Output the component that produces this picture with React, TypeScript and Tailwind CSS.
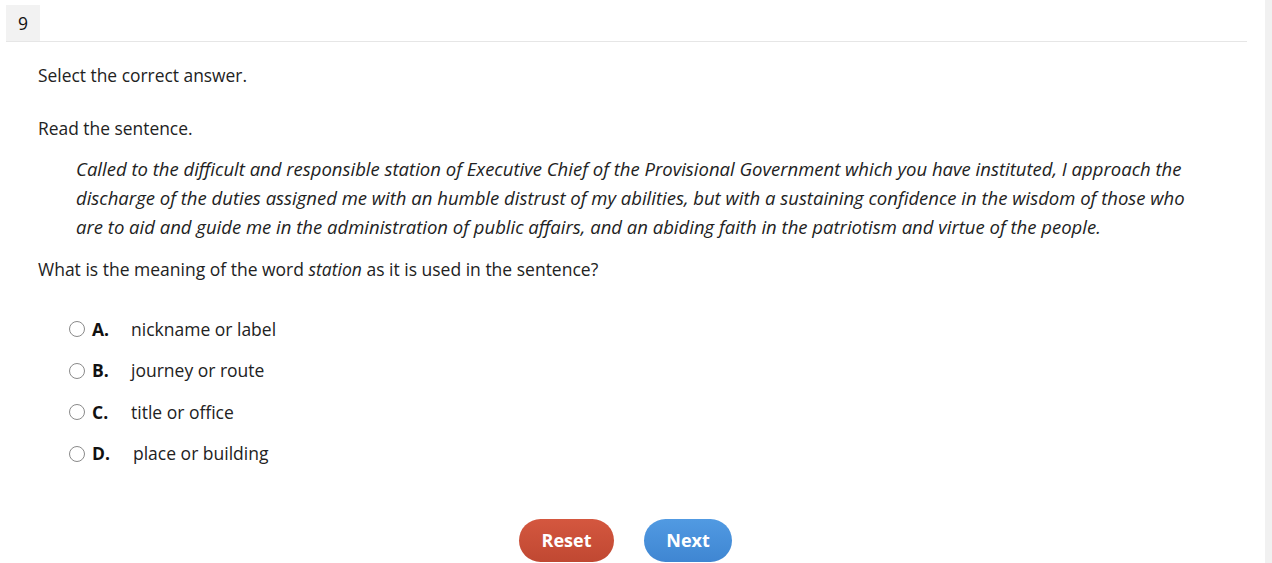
import React from 'react';

const options = [
  { key: 'A', text: 'nickname or label' },
  { key: 'B', text: 'journey or route' },
  { key: 'C', text: 'title or office' },
  { key: 'D', text: 'place or building' },
];

export default function App() {
  return (
    <div className="flex h-[563px] w-full overflow-hidden bg-white font-['Open_Sans',sans-serif] text-[#222]">
      <div className="flex-1 pl-[6px] pr-[18px] pt-[5px]">
        {/* Question number */}
        <div className="border-b border-[#e6e6e6]">
          <div className="flex h-[36px] w-[34px] items-center justify-center bg-[#f2f2f2] text-[17.5px] text-[#111]">
            9
          </div>
        </div>

        <div className="pl-[32px] pr-[30px]">
          <p className="mt-[20px] text-[17.4px] leading-[26px]">Select the correct answer.</p>
          <p className="mt-[27px] text-[17.4px] leading-[26px]">Read the sentence.</p>
          <p className="mt-[13px] max-w-[1158px] pl-[38px] text-[18.5px] italic leading-[29px] text-[#222]">
            Called to the difficult and responsible station of Executive Chief of the Provisional Government which you have instituted, I approach the discharge of the duties assigned me with an humble distrust of my abilities, but with a sustaining confidence in the wisdom of those who are to aid and guide me in the administration of public affairs, and an abiding faith in the patriotism and virtue of the people.
          </p>
          <p className="mt-[15px] text-[17.5px] leading-[26px]">
            What is the meaning of the word <i>station</i> as it is used in the sentence?
          </p>

          <div className="mt-[34px] flex flex-col gap-[15.5px] pl-[31px]">
            {options.map((o) => (
              <label key={o.key} className="flex h-[26px] items-center text-[17.5px]">
                <span className="h-[16px] w-[16px] rounded-full border border-[#8a8a8a] bg-white" />
                <span className="ml-[7px] w-[39px] font-bold text-[#111]">{o.key}.</span>
                <span className={o.key === 'D' ? 'ml-[2px]' : ''}>{o.text}</span>
              </label>
            ))}
          </div>

          <div className="mt-[52px] flex justify-center gap-[30px] pr-[4px]">
            <button className="h-[43px] w-[95px] rounded-full bg-gradient-to-b from-[#d4573f] to-[#c04832] text-[18px] font-bold text-white">
              Reset
            </button>
            <button className="h-[43px] w-[88px] rounded-full bg-gradient-to-b from-[#519ae2] to-[#3f86d2] text-[18px] font-bold text-white">
              Next
            </button>
          </div>
        </div>
      </div>
      <div className="w-[7px] bg-[#f1f1f1]" />
    </div>
  );
}
